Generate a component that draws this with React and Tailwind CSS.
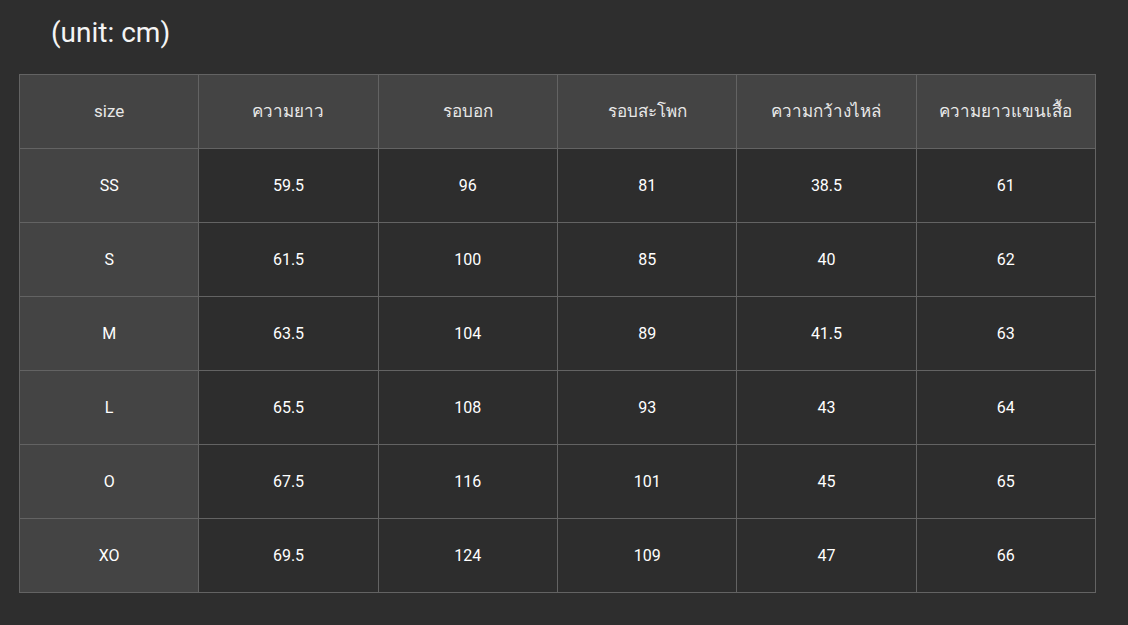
import React from 'react'

const headers = ['size', 'ความยาว', 'รอบอก', 'รอบสะโพก', 'ความกว้างไหล่', 'ความยาวแขนเสื้อ']

const rows = [
  ['SS', '59.5', '96', '81', '38.5', '61'],
  ['S', '61.5', '100', '85', '40', '62'],
  ['M', '63.5', '104', '89', '41.5', '63'],
  ['L', '65.5', '108', '93', '43', '64'],
  ['O', '67.5', '116', '101', '45', '65'],
  ['XO', '69.5', '124', '109', '47', '66'],
]

const App = () => {
  return (
    <div
      className="min-h-[625px] bg-[#2e2e2e] px-[19px] pt-[16px]"
      style={{ fontFamily: 'Roboto, "Noto Sans", "DejaVu Sans", sans-serif' }}
    >
      <h1 className="pl-[32px] text-[28px] leading-[34px] text-[#f4f4f4]">(unit: cm)</h1>

      <table className="mt-[24px] w-[1077px] table-fixed border-collapse">
        <thead>
          <tr className="h-[74px] bg-[#444444]">
            {headers.map((h) => (
              <th
                key={h}
                className="border border-[#636363] text-center text-[17px] font-normal text-[#e8e8e8]"
              >
                {h}
              </th>
            ))}
          </tr>
        </thead>
        <tbody>
          {rows.map((row) => (
            <tr key={row[0]} className="h-[74px]">
              {row.map((cell, i) => (
                <td
                  key={i}
                  className={
                    i === 0
                      ? 'border border-[#636363] bg-[#444444] text-center text-[16px] font-normal text-white'
                      : 'border border-[#636363] bg-[#2d2d2d] text-center text-[16px] font-normal text-white'
                  }
                >
                  {cell}
                </td>
              ))}
            </tr>
          ))}
        </tbody>
      </table>
    </div>
  )
}

export default App
